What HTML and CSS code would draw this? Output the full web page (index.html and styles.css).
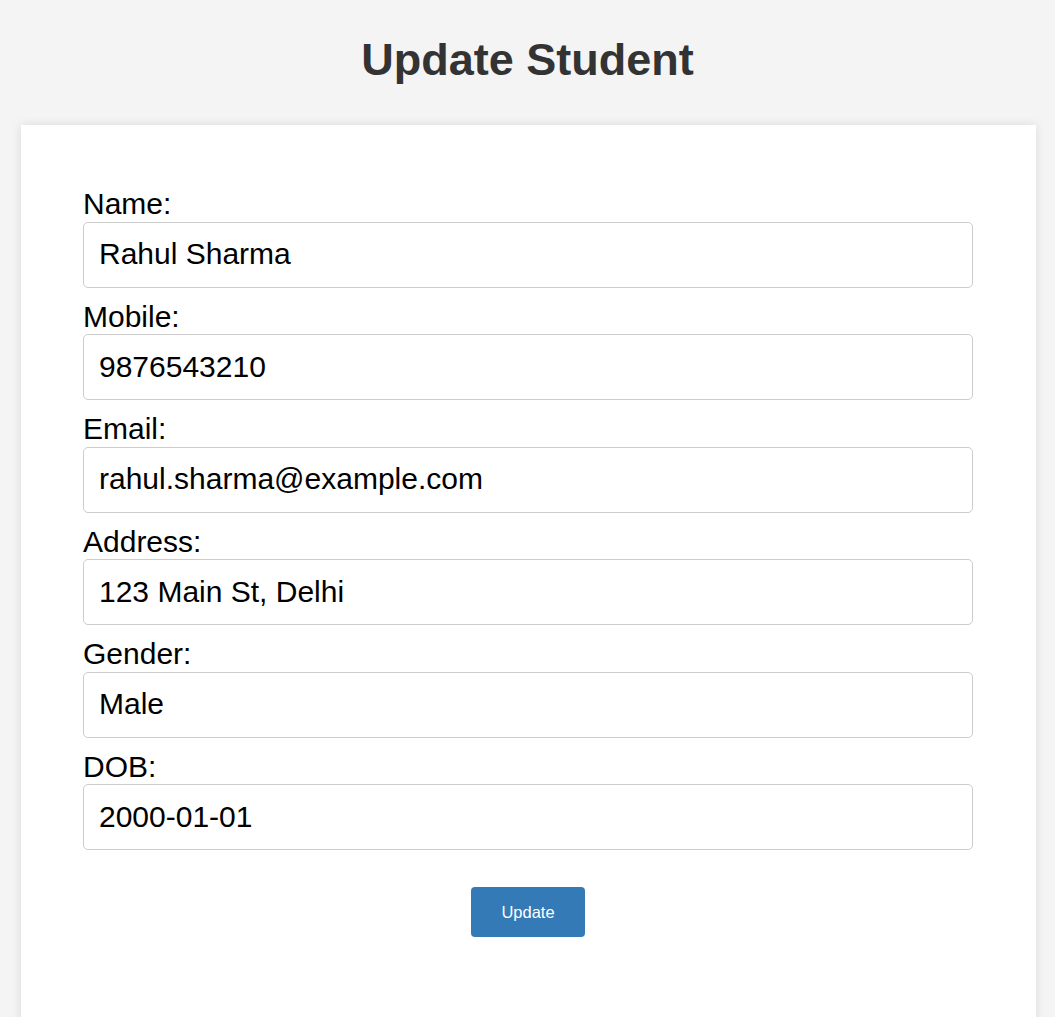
FILE: index.html
```html
<!DOCTYPE html>
<html lang="en">
<head>
<meta charset="utf-8">
<title>Update Student</title>
<link rel="stylesheet" href="styles.css">
</head>
<body>
<h1 class="title">Update Student</h1>
<div class="card">
  <form class="form">
    <label class="label" for="name">Name:</label>
    <input class="input" id="name" type="text" value="Rahul Sharma">
    <label class="label" for="mobile">Mobile:</label>
    <input class="input" id="mobile" type="text" value="9876543210">
    <label class="label" for="email">Email:</label>
    <input class="input" id="email" type="text" value="rahul.sharma@example.com">
    <label class="label" for="address">Address:</label>
    <input class="input" id="address" type="text" value="123 Main St, Delhi">
    <label class="label" for="gender">Gender:</label>
    <input class="input" id="gender" type="text" value="Male">
    <label class="label" for="dob">DOB:</label>
    <input class="input" id="dob" type="text" value="2000-01-01">
    <div class="actions">
      <button class="btn" type="button">Update</button>
    </div>
  </form>
</div>
</body>
</html>
```
FILE: styles.css
```css
* { box-sizing: border-box; }
html, body {
  margin: 0;
  padding: 0;
  background: #f4f4f4;
  font-family: "Liberation Sans", Arial, sans-serif;
}
body {
  padding-top: 34px;
}
.title {
  margin: 0 0 39px;
  text-align: center;
  font-size: 45px;
  font-weight: bold;
  color: #333;
  line-height: normal;
}
.card {
  margin: 0 19px 0 21px;
  background: #fff;
  padding: 60px 63px 100px 62px;
  box-shadow: 0 0 10px rgba(0, 0, 0, 0.1);
}
.form {
  display: flex;
  flex-direction: column;
}
.label {
  display: block;
  font-size: 30px;
  color: #000;
  line-height: 34.5px;
  padding-top: 2px;
  margin-bottom: 0;
}
.input {
  display: block;
  width: 100%;
  height: 66px;
  font-family: "Liberation Sans", Arial, sans-serif;
  font-size: 30px;
  line-height: normal;
  color: #000;
  padding: 0 15px 1px;
  border: 1px solid #ccc;
  border-radius: 5px;
  margin: 0 0 10px;
  background: #fff;
}
.actions {
  display: flex;
  justify-content: center;
  padding-top: 27px;
}
.btn {
  width: 114px;
  height: 50px;
  background: #337ab7;
  color: #fff;
  border: none;
  border-radius: 4px;
  font-family: "Liberation Sans", Arial, sans-serif;
  font-size: 16.5px;
  cursor: pointer;
}
```
